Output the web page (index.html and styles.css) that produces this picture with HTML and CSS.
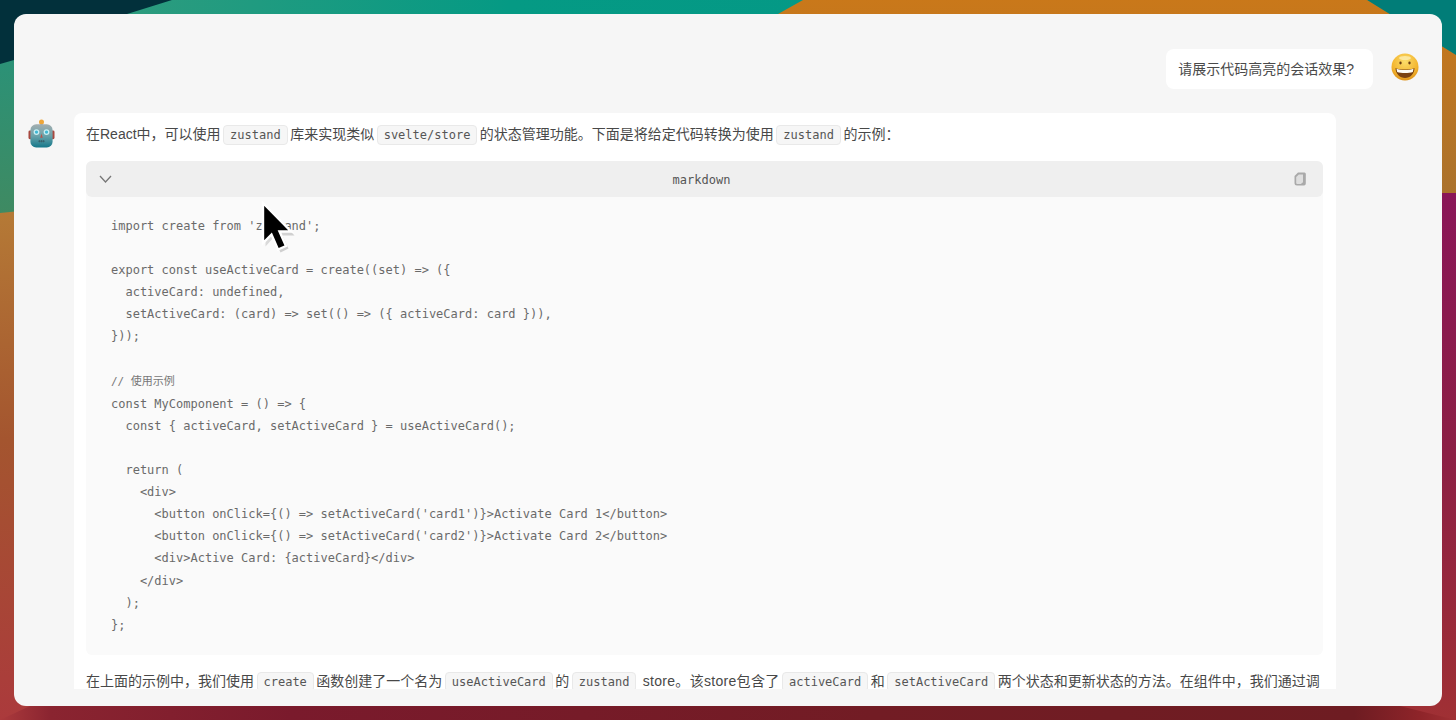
FILE: index.html
```html
<!DOCTYPE html>
<html lang="zh-CN">
<head>
<meta charset="utf-8">
<title>Chat</title>
<link rel="stylesheet" href="styles.css">
</head>
<body>
<svg class="wallpaper" viewBox="0 0 1456 720" aria-hidden="true">
  <defs>
    <linearGradient id="gBottom" x1="0" x2="1" y1="0" y2="0">
      <stop offset="0" stop-color="#ab3a3c"/><stop offset="0.035" stop-color="#8a2430"/><stop offset="0.2" stop-color="#7a1a2c"/><stop offset="0.6" stop-color="#721c24"/><stop offset="0.93" stop-color="#6e1c22"/><stop offset="0.975" stop-color="#8e2429"/><stop offset="1" stop-color="#a03034"/>
    </linearGradient>
    <linearGradient id="gTop" x1="0" x2="1" y1="0" y2="0">
      <stop offset="0" stop-color="#3a9c7c"/><stop offset="0.35" stop-color="#059a84"/><stop offset="1" stop-color="#02978a"/>
    </linearGradient>
    <linearGradient id="gGreen" x1="0" x2="0" y1="0" y2="1">
      <stop offset="0" stop-color="#2a9278"/><stop offset="1" stop-color="#3f8a62"/>
    </linearGradient>
    <linearGradient id="gLeft" x1="0" x2="0" y1="0" y2="1">
      <stop offset="0" stop-color="#b57a36"/><stop offset="0.45" stop-color="#a4552f"/><stop offset="1" stop-color="#ab3a3c"/>
    </linearGradient>
    <linearGradient id="gOrange" x1="0" x2="0" y1="0" y2="1">
      <stop offset="0" stop-color="#c9781a"/><stop offset="1" stop-color="#ab722c"/>
    </linearGradient>
    <linearGradient id="gMagenta" x1="0" x2="0" y1="0" y2="1">
      <stop offset="0" stop-color="#8a1658"/><stop offset="0.5" stop-color="#8c1f44"/><stop offset="1" stop-color="#a03034"/>
    </linearGradient>
  </defs>
  <rect width="1456" height="720" fill="url(#gBottom)"/>
  <polygon points="0,0 1456,0 1456,60 1300,60 100,60 0,60" fill="url(#gTop)"/>
  <polygon points="0,60 30,50 30,214 0,214" fill="url(#gGreen)"/>
  <polygon points="0,213 30,210 30,706 0,720" fill="url(#gLeft)"/>
  <polygon points="0,0 172,0 127,14 14,60 0,64" fill="#02303b"/>
  <polygon points="1367,0 1456,0 1456,60" fill="#017d78"/>
  <polygon points="803,0 1367,0 1456,55 1456,193 1400,193 1400,30 778,14" fill="url(#gOrange)"/>
  <polygon points="1400,193 1456,193 1456,720 1400,706" fill="url(#gMagenta)"/>
</svg>

<main class="window">
  <div class="scroll">
    <section class="row row-user">
      <div class="bubble">请展示代码高亮的会话效果?</div>
      <svg class="avatar-user" viewBox="0 0 28 28" aria-hidden="true">
        <defs>
          <radialGradient id="gFace" cx="0.5" cy="0.3" r="0.75">
            <stop offset="0" stop-color="#fbdc6a"/><stop offset="0.65" stop-color="#f3b52f"/><stop offset="1" stop-color="#d98a14"/>
          </radialGradient>
        </defs>
        <circle cx="14" cy="14" r="13.5" fill="url(#gFace)"/>
        <ellipse cx="14" cy="5" rx="6" ry="2" fill="#fdeeb0" opacity="0.8"/>
        <ellipse cx="9.5" cy="10" rx="1.2" ry="1.4" fill="#6b3d12"/>
        <ellipse cx="18.5" cy="10" rx="1.2" ry="1.4" fill="#6b3d12"/>
        <path d="M4.5 15 C8 17 20 17 23.500 15 C23.500 21 19 25 14 25 C9 25 4.500 21 4.500 15Z" fill="#7a4212"/>
        <path d="M5.500 15.800 C9 17.400 19 17.400 22.500 15.800 L21.800 19 C18 20.400 10 20.400 6.200 19Z" fill="#fbfbf6"/>
      </svg>
    </section>

    <section class="row row-bot">
      <svg class="avatar-bot" viewBox="0 0 28 30" aria-hidden="true">
        <defs>
          <linearGradient id="gHead" x1="0" x2="0" y1="0" y2="1">
            <stop offset="0" stop-color="#a3aeb0"/><stop offset="0.5" stop-color="#6aa2aa"/><stop offset="1" stop-color="#14788a"/>
          </linearGradient>
        </defs>
        <rect x="0.500" y="12" width="4" height="9" rx="1.500" fill="#a8483f"/>
        <rect x="23.500" y="12" width="4" height="9" rx="1.500" fill="#a8483f"/>
        <rect x="12.800" y="3" width="2.400" height="4" fill="#8a8f90"/>
        <circle cx="14" cy="3" r="2.600" fill="#eea63a"/>
        <rect x="2.500" y="5.500" width="23" height="24" rx="6" fill="url(#gHead)"/>
        <circle cx="8.800" cy="13.500" r="3" fill="#c9eef3"/>
        <circle cx="19.200" cy="13.500" r="3" fill="#c9eef3"/>
        <circle cx="8.800" cy="13.500" r="1.700" fill="#3fb7d2"/>
        <circle cx="19.200" cy="13.500" r="1.700" fill="#3fb7d2"/>
        <path d="M14 15 L15.300 19.500 H12.700Z" fill="#b9534a"/>
        <path d="M10.500 23 H17.500 M12 21.800 V24.200 M14 21.800 V24.200 M16 21.800 V24.200" stroke="#35565f" stroke-width="0.700" fill="none"/>
      </svg>

      <article class="card">
        <p class="para">在React中，可以使用<code class="chip">zustand</code>库来实现类似<code class="chip">svelte/store</code>的状态管理功能。下面是将给定代码转换为使用<code class="chip">zustand</code>的示例：</p>

        <div class="code-block">
          <header class="code-head">
            <svg class="chevron" viewBox="0 0 13 8" aria-hidden="true"><path d="M1 1 L6.500 7 L12 1" fill="none" stroke="#777" stroke-width="1.300"/></svg>
            <span class="lang">markdown</span>
            <svg class="copy" viewBox="0 0 12 14" aria-hidden="true">
              <path d="M4 0.500 H10.500 Q11.800 0.500 11.800 2 V11.500 Q11.800 13.500 10 13.500 H3 Q0.500 13.500 0.500 11 V4Z" fill="#a9a9a9"/>
              <path d="M2.200 5 L4.800 2.600 H9 V10.300 L6.800 12 H3.200 Q2.200 12 2.200 11Z" fill="#dedede"/>
            </svg>
          </header>
<pre class="code">import create from 'zustand';

export const useActiveCard = create((set) =&gt; ({
  activeCard: undefined,
  setActiveCard: (card) =&gt; set(() =&gt; ({ activeCard: card })),
}));

<span class="comment">// 使用示例</span>
const MyComponent = () =&gt; {
  const { activeCard, setActiveCard } = useActiveCard();

  return (
    &lt;div&gt;
      &lt;button onClick={() =&gt; setActiveCard('card1')}&gt;Activate Card 1&lt;/button&gt;
      &lt;button onClick={() =&gt; setActiveCard('card2')}&gt;Activate Card 2&lt;/button&gt;
      &lt;div&gt;Active Card: {activeCard}&lt;/div&gt;
    &lt;/div&gt;
  );
};</pre>
        </div>

        <p class="para para-last">在上面的示例中，我们使用<code class="chip">create</code>函数创建了一个名为<code class="chip">useActiveCard</code>的<code class="chip">zustand</code> <span class="wide">store。该store包含了</span><code class="chip">activeCard</code>和<code class="chip">setActiveCard</code>两个状态和更新状态的方法。在组件中，我们通过调</p>
      </article>
    </section>
  </div>
</main>

<svg class="cursor" viewBox="0 0 34 52" aria-hidden="true">
  <defs>
    <linearGradient id="gShadow" x1="0" x2="1" y1="0" y2="1">
      <stop offset="0" stop-color="#000" stop-opacity="0.08"/><stop offset="1" stop-color="#000" stop-opacity="0.2"/>
    </linearGradient>
  </defs>
  <path d="M3 3 V44 L11 35 L18 50 L26 46 L20 33 H32Z" fill="url(#gShadow)" transform="translate(1.500 1.500)"/>
  <path d="M2 2 V42 L10.500 33.500 L17 48.500 L25 45 L18.500 30.500 H30Z" fill="#000" stroke="#fff" stroke-width="2.400" stroke-linejoin="miter"/>
</svg>
</body>
</html>
```
FILE: styles.css
```css
* { box-sizing: border-box; }

html, body { margin: 0; height: 720px; }

body {
  display: flex;
  padding: 14px;
  overflow: hidden;
  position: relative;
  font-family: "Liberation Sans", "Noto Sans CJK SC", sans-serif;
  font-size: 14px;
  color: #484848;
}

.wallpaper {
  position: absolute;
  left: 0;
  top: 0;
  width: 1456px;
  height: 720px;
}

.window {
  position: relative;
  flex: 1;
  display: flex;
  flex-direction: column;
  background: #f6f6f6;
  border-radius: 12px;
  padding-bottom: 17px;
  overflow: hidden;
}

.scroll {
  flex: 1;
  min-height: 0;
  overflow: hidden;
  padding-top: 35px;
}

.row { display: flex; }

.row-user {
  justify-content: flex-end;
  align-items: center;
  gap: 18px;
  padding-right: 23px;
}

.bubble {
  height: 40px;
  line-height: 40px;
  padding: 0 19px 0 12px;
  background: #fff;
  border-radius: 8px;
  color: #4a4a4a;
}

.avatar-user { width: 28px; height: 28px; margin-top: -4px; }

.row-bot {
  align-items: flex-start;
  gap: 19px;
  margin-top: 24px;
  padding: 0 106px 0 14px;
}

.avatar-bot { width: 27px; height: 29px; flex: none; margin-top: 6px; }

.card {
  flex: 1;
  min-width: 0;
  background: #fff;
  border-radius: 8px;
  padding: 10px 13px 12px 12px;
}

.para {
  margin: 0;
  height: 22px;
  line-height: 22px;
  white-space: nowrap;
}

.chip {
  display: inline-block;
  height: 20px;
  line-height: 19px;
  margin: 0 2.5px;
  padding: 0 6px;
  border: 1px solid #e9e9e9;
  border-radius: 4px;
  background: #f6f6f6;
  font-family: "DejaVu Sans Mono", monospace;
  font-size: 12px;
  color: #555;
}

.code-block {
  margin-top: 16px;
  border-radius: 6px;
  background: #fafafa;
}

.code-head {
  display: flex;
  align-items: center;
  justify-content: space-between;
  height: 36px;
  padding: 0 17px 0 13px;
  background: #efefef;
  border-radius: 6px;
}

.chevron { width: 13px; height: 8px; }

.lang {
  font-family: "DejaVu Sans Mono", monospace;
  font-size: 12px;
  color: #555;
  margin: 2px 3px 0 0;
}

.copy { width: 12px; height: 14px; margin-top: -1px; }

.code {
  margin: 0;
  padding: 18px 25px 20px;
  font-family: "DejaVu Sans Mono", "Noto Sans CJK SC", monospace;
  font-size: 12px;
  line-height: 22.1px;
  color: #6a6a6a;
  height: 458px;
  overflow: hidden;
}

.comment { color: #777; font-size: 11px; }

.para-last { margin-top: 15px; }
.wide { letter-spacing: 0.3px; }

.cursor {
  position: absolute;
  left: 261px;
  top: 201px;
  width: 34px;
  height: 52px;
}
```
